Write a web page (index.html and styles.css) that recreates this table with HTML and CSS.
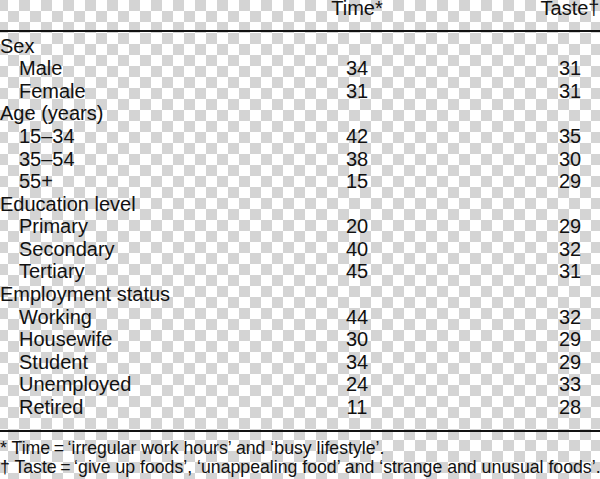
FILE: index.html
```html
<!DOCTYPE html>
<html lang="en">
<head>
<meta charset="utf-8">
<title>Table</title>
<link rel="stylesheet" href="styles.css">
</head>
<body>
<div class="table">
  <div class="head">
    <div class="label"></div>
    <div class="time">Time*</div>
    <div class="taste">Taste†</div>
  </div>
  <div class="rule"></div>
  <div class="body">
    <div class="row"><div class="label">Sex</div><div class="time"></div><div class="taste"></div></div>
    <div class="row"><div class="label sub">Male</div><div class="time">34</div><div class="taste">31</div></div>
    <div class="row"><div class="label sub">Female</div><div class="time">31</div><div class="taste">31</div></div>
    <div class="row"><div class="label">Age (years)</div><div class="time"></div><div class="taste"></div></div>
    <div class="row"><div class="label sub">15–34</div><div class="time">42</div><div class="taste">35</div></div>
    <div class="row"><div class="label sub">35–54</div><div class="time">38</div><div class="taste">30</div></div>
    <div class="row"><div class="label sub">55+</div><div class="time">15</div><div class="taste">29</div></div>
    <div class="row"><div class="label">Education level</div><div class="time"></div><div class="taste"></div></div>
    <div class="row"><div class="label sub">Primary</div><div class="time">20</div><div class="taste">29</div></div>
    <div class="row"><div class="label sub">Secondary</div><div class="time">40</div><div class="taste">32</div></div>
    <div class="row"><div class="label sub">Tertiary</div><div class="time">45</div><div class="taste">31</div></div>
    <div class="row"><div class="label">Employment status</div><div class="time"></div><div class="taste"></div></div>
    <div class="row"><div class="label sub">Working</div><div class="time">44</div><div class="taste">32</div></div>
    <div class="row"><div class="label sub">Housewife</div><div class="time">30</div><div class="taste">29</div></div>
    <div class="row"><div class="label sub">Student</div><div class="time">34</div><div class="taste">29</div></div>
    <div class="row"><div class="label sub">Unemployed</div><div class="time">24</div><div class="taste">33</div></div>
    <div class="row"><div class="label sub">Retired</div><div class="time">11</div><div class="taste">28</div></div>
  </div>
  <div class="rule"></div>
  <div class="notes">
    <p class="note">* Time&#8201;=&#8201;‘irregular work hours’ and ‘busy lifestyle’.</p>
    <p class="note">† Taste&#8201;=&#8201;‘give up foods’, ‘unappealing food’ and ‘strange and unusual foods’.</p>
  </div>
</div>
</body>
</html>
```
FILE: styles.css
```css
html {
  background-color: #ffffff;
  background-image: repeating-conic-gradient(#ffffff 0 25%, #d4d4d4 0 50%);
  background-size: 22px 22px;
  background-position: -3px 0;
  min-height: 100%;
}

body {
  margin: 0;
  font-family: "Liberation Sans", Arial, sans-serif;
  color: #111111;
  width: 600px;
  height: 479px;
  overflow: hidden;
}

.table {
  display: flex;
  flex-direction: column;
}

.head,
.row {
  display: flex;
  font-size: 20px;
}

.head {
  line-height: 16px;
  height: 16px;
  margin-bottom: 14px;
}

.row {
  line-height: 22.56px;
}

.label {
  flex: 1;
  white-space: nowrap;
}

.label.sub {
  padding-left: 19px;
}

.time {
  width: 100px;
  text-align: center;
}

.taste {
  width: 60px;
  margin-left: 133px;
  text-align: center;
  white-space: nowrap;
}

.rule {
  height: 2px;
  background: #111111;
}

.body {
  padding-top: 2.8px;
  padding-bottom: 11.7px;
}

.notes {
  padding-top: 7.4px;
}

.note {
  margin: 0;
  font-size: 17.7px;
  line-height: 19px;
  white-space: nowrap;
}
```
